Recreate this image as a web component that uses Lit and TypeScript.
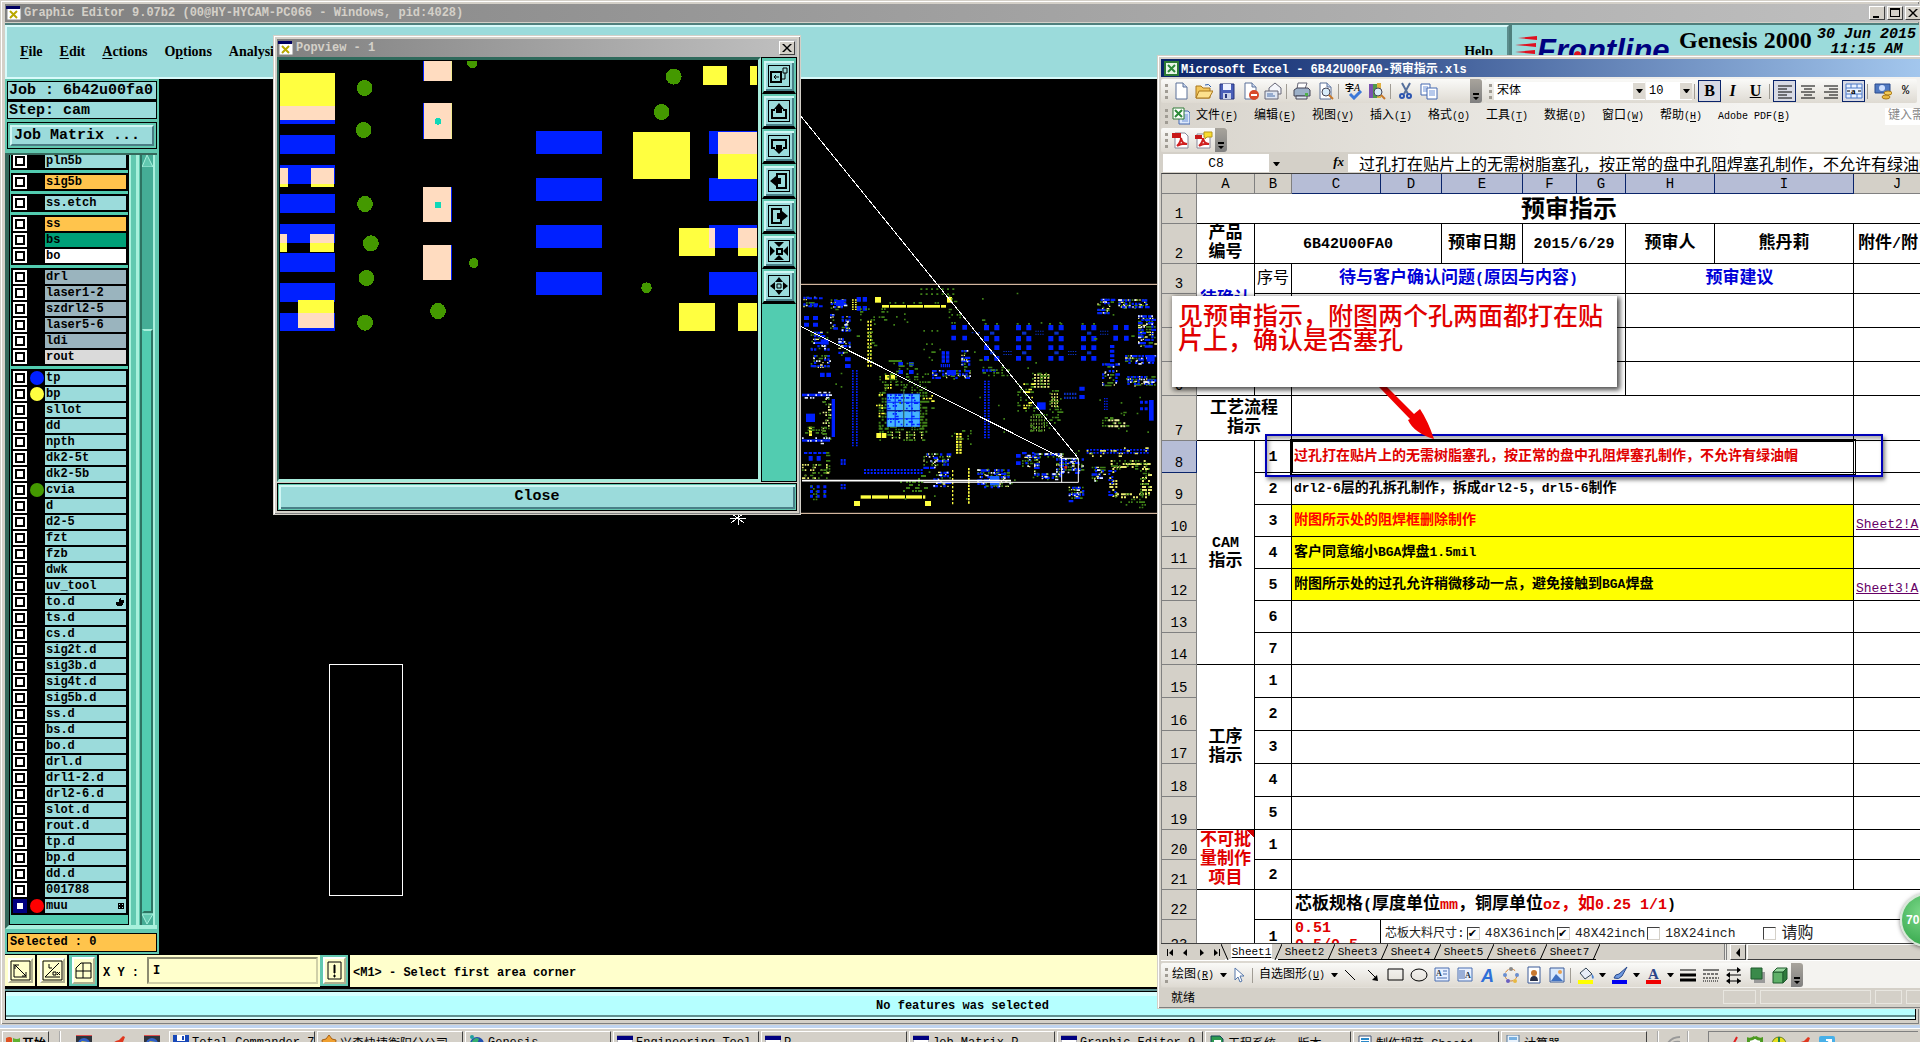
import { LitElement, html, svg, css, nothing } from "lit";
import { customElement } from "lit/decorators.js";
import { classMap } from "lit/directives/class-map.js";

type Layer = { name: string; tone?: string; dot?: string; mark?: string; on?: boolean };

const plain = (...names: string[]): Layer[] => names.map((name) => ({ name }));
const toned = (tone: string, ...names: string[]): Layer[] => names.map((name) => ({ name, tone }));

const LAYER_GROUPS: Layer[][] = [
  plain("pln5b"),
  toned("amber", "sig5b"),
  plain("ss.etch"),
  [{ name: "ss", tone: "amber" }, { name: "bs", tone: "jade" }, { name: "bo", tone: "white" }],
  [...toned("slate", "drl", "laser1-2", "szdrl2-5", "laser5-6", "ldi"), { name: "rout", tone: "silver" }],
  [
    { name: "tp", dot: "blue" },
    { name: "bp", dot: "yellow" },
    ...plain("sllot", "dd", "npth", "dk2-5t", "dk2-5b"),
    { name: "cvia", dot: "green" },
    ...plain("d", "d2-5", "fzt", "fzb", "dwk", "uv_tool"),
    { name: "to.d", mark: "hand" },
    ...plain("ts.d", "cs.d", "sig2t.d", "sig3b.d", "sig4t.d", "sig5b.d", "ss.d", "bs.d", "bo.d", "drl.d",
      "drl1-2.d", "drl2-6.d", "slot.d", "rout.d", "tp.d", "bp.d", "dd.d", "001788"),
    { name: "muu", dot: "red", mark: "grid", on: true },
  ],
];

const BLUE = "#0020ff";
const YELLOW = "#ffff40";
const PEACH = "#ffdcc0";
const GREEN = "#449900";
const DIM = "#3f8018";
const WHITE = "#ffffff";

/** Wraps the Chinese runs of a mixed string so that they can be sized apart from the Latin ones. */
const mix = (text: string) =>
  text.split(/([\u2e80-\u9fff\uff00-\uffef]+)/).map((part, i) => (i % 2 ? html`<span class="cj">${part}</span>` : part));

const block = (x: number, y: number, w: number, h: number, fill: string) =>
  svg`<rect x=${x} y=${y} width=${w} height=${h} fill=${fill}></rect>`;

/** One path holding a regular array of pads. */
const pads = (x: number, y: number, cols: number, rows: number, dx: number, dy: number, w: number, h: number, fill: string) => {
  let d = "";
  for (let r = 0; r < rows; r++) for (let c = 0; c < cols; c++) d += `M${x + c * dx} ${y + r * dy}h${w}v${h}h${-w}z`;
  return svg`<path d=${d} fill=${fill}></path>`;
};

/** One path of loosely scattered pads, seeded so that the board is always the same. */
const scatter = (x: number, y: number, w: number, h: number, n: number, s: number, fill: string, seed: number) => {
  let v = Math.imul(seed + 1, 0x9e3779b1);
  const next = () => {
    v = (v + 0x6d2b79f5) | 0;
    let t = Math.imul(v ^ (v >>> 15), 1 | v);
    t = (t + Math.imul(t ^ (t >>> 7), 61 | t)) ^ t;
    return ((t ^ (t >>> 14)) >>> 0) / 4294967296;
  };
  const step = s + 3;
  let d = "";
  for (let i = 0; i < n; i++) {
    const px = x + Math.floor((next() * w) / step) * step;
    const py = y + Math.floor((next() * h) / step) * step;
    const k = next() > 0.8 ? s * 2 : s;
    d += `M${px} ${py}h${k}v${s}h${-k}z`;
  }
  return svg`<path d=${d} fill=${fill}></path>`;
};

/** A dense neighbourhood of mixed small parts. */
const parts = (x: number, y: number, w: number, h: number, n: number, seed: number) => [
  scatter(x, y, w, h, Math.round(n * 0.9), 5, DIM, seed),
  scatter(x, y, w, h, Math.round(n * 0.8), 7, BLUE, seed + 1),
  scatter(x, y, w, h, Math.round(n * 0.4), 4, "#f4f08a", seed + 2),
  scatter(x, y, w, h, Math.round(n * 0.2), 5, "#dfe6ff", seed + 3),
];

const boardArt = () => svg`
  <g transform="translate(790 240) scale(0.33333)">
    ${parts(40, 170, 40, 30, 8, 3)} ${pads(55, 172, 3, 2, 16, 24, 11, 6, BLUE)}
    ${parts(122, 178, 50, 26, 14, 5)} ${block(138, 180, 24, 18, BLUE)}
    ${pads(200, 171, 2, 2, 18, 27, 13, 14, BLUE)} ${pads(186, 178, 2, 5, 9, 7, 5, 4, YELLOW)}
    ${pads(42, 228, 2, 2, 27, 20, 15, 12, BLUE)}
    ${parts(120, 222, 12, 50, 8, 8)} ${parts(155, 228, 26, 50, 16, 11)}
    ${parts(62, 275, 56, 60, 26, 14)} ${parts(145, 295, 36, 50, 16, 17)} ${parts(62, 345, 60, 40, 20, 20)}
    ${block(92, 298, 24, 16, BLUE)} ${pads(90, 398, 2, 1, 19, 1, 14, 13, BLUE)} ${pads(165, 352, 1, 2, 1, 20, 17, 12, BLUE)}
    ${block(255, 171, 18, 17, YELLOW)} ${block(471, 171, 15, 17, YELLOW)}
    ${block(276, 195, 192, 8, YELLOW)} ${pads(297, 193, 4, 1, 51, 1, 3, 12, "#000")}
    ${scatter(290, 186, 160, 8, 10, 5, DIM, 23)}
    ${pads(391, 145, 7, 2, 16, 15, 6, 5, DIM)} ${scatter(476, 150, 36, 110, 14, 5, DIM, 24)}
    ${scatter(210, 205, 90, 45, 18, 5, DIM, 26)} ${scatter(310, 220, 70, 70, 6, 5, DIM, 27)} ${scatter(400, 270, 60, 90, 12, 5, DIM, 28)}
    ${pads(232, 242, 2, 13, 8, 11, 5, 6, YELLOW)} ${scatter(236, 250, 20, 120, 14, 5, DIM, 29)}
    ${pads(186, 390, 2, 29, 12, 8, 5, 5, BLUE)}
    ${block(296, 360, 40, 6, DIM)} ${pads(325, 366, 2, 2, 32, 24, 14, 12, BLUE)}
    ${scatter(310, 368, 75, 40, 14, 5, DIM, 30)}
    ${pads(285, 405, 2, 1, 17, 1, 13, 14, YELLOW)} ${pads(284, 432, 3, 2, 8, 9, 5, 5, YELLOW)}
    ${scatter(268, 400, 150, 60, 80, 5, DIM, 31)} ${scatter(266, 455, 24, 120, 44, 6, DIM, 32)}
    ${scatter(388, 455, 24, 120, 44, 6, DIM, 33)} ${scatter(268, 558, 140, 44, 60, 5, DIM, 34)}
    ${block(290, 461, 100, 99, BLUE)}
    ${pads(292, 463, 4, 4, 25, 25, 22, 22, "#45b4ff")}
    ${scatter(292, 463, 92, 92, 60, 5, BLUE, 35)}
    ${block(289, 511, 102, 3, "#102060")} ${block(340, 450, 3, 108, "#408040")}
    ${pads(259, 579, 2, 1, 16, 1, 14, 15, YELLOW)} ${pads(305, 575, 5, 3, 22, 8, 4, 5, "#e8e870")}
    ${scatter(258, 462, 20, 90, 10, 5, YELLOW, 36)} ${scatter(400, 465, 34, 20, 8, 5, YELLOW, 37)}
    ${block(36, 461, 84, 8, BLUE)} ${scatter(36, 455, 84, 20, 14, 5, "#dfe6ff", 38)}
    ${block(125, 477, 10, 114, BLUE)} ${scatter(98, 475, 24, 110, 24, 5, "#e8f090", 39)} ${scatter(98, 475, 24, 130, 22, 5, DIM, 40)}
    ${block(48, 521, 27, 25, BLUE)} ${pads(57, 560, 1, 3, 1, 10, 9, 8, YELLOW)} ${scatter(45, 560, 60, 30, 18, 5, DIM, 41)}
    ${block(36, 598, 84, 7, BLUE)} ${scatter(36, 592, 94, 20, 14, 5, "#dfe6ff", 42)}
    ${pads(42, 636, 5, 1, 14, 1, 10, 6, BLUE)} ${pads(56, 648, 2, 1, 24, 1, 12, 14, BLUE)}
    ${scatter(108, 636, 12, 60, 18, 5, DIM, 43)} ${scatter(36, 672, 80, 46, 22, 5, "#e8e870", 44)} ${scatter(36, 672, 80, 50, 20, 5, DIM, 45)}
    ${pads(152, 657, 2, 2, 9, 10, 6, 8, BLUE)} ${pads(152, 732, 2, 2, 9, 9, 6, 7, BLUE)}
    ${pads(60, 736, 3, 3, 20, 14, 9, 9, BLUE)} ${scatter(45, 736, 60, 50, 10, 5, DIM, 46)}
    ${pads(222, 687, 18, 2, 10, 9, 6, 6, BLUE)}
    ${block(212, 766, 194, 10, YELLOW)} ${pads(243, 764, 4, 1, 51, 1, 3, 14, "#000")}
    ${block(192, 783, 18, 15, YELLOW)} ${block(405, 783, 18, 15, YELLOW)} ${scatter(330, 705, 75, 55, 18, 6, DIM, 47)}
    ${parts(426, 390, 115, 26, 26, 50)} ${pads(455, 334, 2, 3, 13, 12, 10, 10, BLUE)} ${pads(452, 372, 5, 1, 6, 1, 4, 10, BLUE)}
    ${block(470, 390, 28, 16, BLUE)} ${parts(514, 330, 22, 60, 16, 54)}
    ${pads(484, 255, 2, 2, 33, 32, 14, 14, BLUE)}
    ${[582, 678, 775, 873].map((x) => [pads(x, 255, 2, 2, 31, 33, 15, 16, BLUE), pads(x, 316, 2, 2, 31, 32, 15, 14, BLUE),
      pads(x + 2, 249, 2, 1, 34, 1, 6, 5, DIM), block(x + 18, 275, 13, 9, "#0a30c0"), block(x + 18, 334, 13, 9, "#0a30c0")])}
    ${pads(970, 255, 2, 2, 32, 32, 14, 15, BLUE)} ${pads(960, 315, 1, 5, 1, 14, 13, 9, BLUE)}
    ${pads(545, 276, 3, 1, 10, 1, 5, 4, "#0a30c0")} ${pads(736, 272, 4, 2, 7, 9, 4, 3, "#0a30c0")} ${pads(930, 272, 4, 2, 7, 9, 4, 3, "#0a30c0")}
    ${pads(640, 333, 4, 2, 7, 9, 4, 3, "#0a30c0")} ${pads(834, 333, 4, 2, 7, 9, 4, 3, "#0a30c0")}
    ${pads(576, 388, 4, 1, 11, 1, 8, 7, BLUE)} ${pads(582, 422, 2, 22, 11, 8, 6, 5, BLUE)} ${scatter(578, 380, 80, 30, 20, 5, DIM, 58)}
    ${pads(732, 402, 5, 5, 10, 9, 6, 5, "#f0f080")} ${scatter(726, 398, 56, 46, 20, 5, DIM, 59)}
    ${scatter(682, 430, 50, 90, 34, 5, DIM, 60)} ${scatter(700, 430, 28, 90, 14, 5, YELLOW, 61)}
    ${block(741, 487, 26, 22, BLUE)} ${scatter(778, 450, 40, 90, 40, 5, DIM, 62)} ${pads(784, 460, 3, 5, 8, 9, 4, 5, "#e8e870")}
    ${pads(722, 528, 6, 5, 8, 10, 3, 6, "#8fb84a")} ${scatter(720, 522, 80, 55, 24, 5, DIM, 63)}
    ${pads(868, 440, 1, 2, 1, 25, 16, 12, BLUE)} ${pads(822, 458, 5, 2, 8, 12, 5, 7, "#0a30c0")}
    ${pads(498, 579, 2, 8, 10, 8, 7, 6, YELLOW)} ${scatter(484, 570, 70, 60, 12, 5, DIM, 64)}
    ${parts(400, 640, 80, 44, 30, 66)} ${pads(486, 690, 1, 9, 1, 12, 4, 7, YELLOW)} ${pads(534, 684, 1, 11, 1, 10, 5, 7, YELLOW)}
    ${parts(430, 695, 50, 50, 20, 70)} ${parts(562, 688, 100, 56, 50, 74)} ${block(600, 708, 28, 28, "#1a60ff")}
    ${pads(678, 642, 1, 2, 1, 22, 14, 11, BLUE)} ${parts(696, 636, 34, 44, 12, 78)}
    ${parts(732, 640, 85, 10, 20, 80)} ${parts(732, 650, 18, 60, 18, 83)} ${parts(798, 645, 22, 65, 24, 86)} ${parts(755, 700, 50, 20, 14, 89)}
    ${parts(825, 655, 56, 44, 24, 92)} ${block(823, 678, 8, 8, "#d03020")}
    ${parts(836, 740, 42, 44, 22, 95)} ${parts(905, 680, 38, 44, 18, 98)}
    ${pads(890, 627, 19, 2, 10, 9, 6, 5, BLUE)} ${scatter(890, 622, 190, 26, 18, 5, "#e8e870", 101)}
    ${parts(922, 176, 44, 46, 18, 103)} ${parts(985, 178, 90, 28, 34, 106)} ${parts(1044, 226, 50, 95, 60, 109)}
    ${parts(1005, 345, 90, 26, 30, 112)} ${block(1070, 345, 24, 20, BLUE)} ${parts(936, 370, 50, 70, 20, 115)} ${parts(1012, 408, 85, 30, 34, 118)}
    ${block(1077, 480, 14, 62, BLUE)} ${pads(1050, 482, 2, 2, 14, 20, 9, 9, BLUE)}
    ${pads(942, 474, 2, 5, 7, 8, 4, 4, BLUE)} ${scatter(936, 515, 80, 60, 24, 5, DIM, 121)} ${scatter(955, 538, 48, 30, 16, 6, "#f0f0a0", 122)}
    ${scatter(962, 660, 112, 24, 30, 6, "#e8e870", 124)} ${scatter(958, 684, 24, 84, 22, 6, "#e8e870", 125)}
    ${scatter(1056, 684, 24, 84, 26, 6, "#e8e870", 126)} ${scatter(975, 760, 100, 18, 20, 6, "#e8e870", 127)}
    ${scatter(955, 660, 128, 26, 30, 5, DIM, 128)} ${scatter(975, 760, 90, 44, 26, 5, DIM, 129)} ${scatter(955, 690, 20, 80, 16, 6, BLUE, 130)}
    ${scatter(1050, 690, 30, 80, 22, 5, DIM, 131)} ${scatter(40, 150, 1050, 640, 50, 5, DIM, 140)}
    <g fill="none" stroke=${PEACH} stroke-width="3"><path d="M0 133H1140M0 820H1140"></path></g>
    <g fill="none" stroke=${WHITE} stroke-width="3">
      <path d="M36 722H663" stroke-width="5"></path><path d="M400 727H865V655H815V727"></path>
    </g>
  </g>
  <g fill="none" stroke="#fff" shape-rendering="crispEdges">
    <path d="M800 115L1078 458M800 326L1062 458"></path>
    <rect x="329" y="664" width="73" height="231"></rect>
    <path d="M731 513l13 10M731 523l13-10M738 511v14M730 518h16"></path>
  </g>`;

const popArt = () => {
  const left: [number, number][] = [[318, 57], [408, 57], [495, 57], [585, 57], [672, 57], [762, 57], [852, 54]];
  const vias: [number, number, number][] = [[275, 177, 24], [272, 303, 24], [276, 525, 24], [293, 643, 24], [280, 747, 24],
    [276, 881, 24], [488, 846, 24], [592, 702, 15], [588, 102, 16], [1173, 143, 24], [1138, 249, 24], [1094, 776, 16]];
  return svg`
    ${left.map(([y, h]) => block(29, y, 160, h, BLUE))}
    ${block(29, 132, 160, 98, YELLOW)} ${block(29, 230, 160, 43, PEACH)} ${block(29, 273, 160, 12, BLUE)}
    ${block(29, 417, 23, 48, PEACH)} ${block(29, 465, 23, 9, YELLOW)} ${block(119, 417, 67, 48, PEACH)} ${block(119, 465, 67, 9, YELLOW)}
    ${block(49, 642, 67, 27, "#000")} ${block(29, 615, 20, 27, PEACH)} ${block(29, 642, 20, 27, YELLOW)}
    ${block(116, 615, 70, 27, PEACH)} ${block(116, 642, 70, 27, YELLOW)}
    ${block(81, 813, 105, 39, YELLOW)} ${block(81, 852, 105, 45, PEACH)}
    ${[[96, 60], [222, 108]].map(([y, h]) => [block(444, y, 84, h, BLUE), block(447, y, 81, h, PEACH), block(525, y, 3, h, "#f0e890")])}
    ${[[474, 105], [648, 105]].map(([y, h]) => [block(444, y, 84, h, BLUE), block(444, y, 81, h, PEACH)])}
    ${[306, 447, 588, 729].map((y) => [block(772, y, 192, 69, BLUE), block(1275, y, 139, 69, BLUE)])}
    ${block(1054, 309, 166, 141, YELLOW)} ${block(1301, 309, 113, 66, PEACH)} ${block(1301, 375, 113, 75, YELLOW)}
    ${block(1257, 111, 70, 57, YELLOW)} ${block(1394, 111, 20, 57, YELLOW)}
    ${block(1188, 597, 104, 84, YELLOW)} ${block(1275, 597, 17, 60, "#ffdcd0")}
    ${block(1359, 597, 55, 60, PEACH)} ${block(1359, 657, 55, 24, YELLOW)}
    ${block(1188, 822, 104, 84, YELLOW)} ${block(1359, 822, 55, 84, YELLOW)}
    ${vias.map(([x, y, r]) => svg`<ellipse cx=${x} cy=${y} rx=${r - 1} ry=${r} fill=${GREEN}></ellipse>`)}
    ${[277, 528].map((y) => svg`<ellipse cx="488" cy=${y} rx="10" ry="10" fill="#10d8b8"></ellipse>`)}
    ${block(560, 86, 60, 9, "#000")}`;
};

/* Zoom and pan icons of the popview, on a 22 x 22 field. */
const POP_ICONS: [string, unknown][] = [
  ["Zoom to window", svg`<path d="M3 7h10v10H3zM15 3h4v5h-4zM13 14h4v-6" fill="none" stroke="#000"></path><path d="M3 7h10v10H3z" fill="none" stroke="#000" stroke-width="2"></path><path d="M6 12h5M8 10l-2 2 2 2" fill="none" stroke="#000"></path>`],
  ["Pan up", svg`<path d="M7 10H4v8h14v-8h-3" fill="none" stroke="#000" stroke-width="2"></path><path d="M11 3l5 6h-2v4H8V9H6z"></path>`],
  ["Pan down", svg`<path d="M7 13H4V5h14v8h-3" fill="none" stroke="#000" stroke-width="2"></path><path d="M11 19l5-5h-2v-4H8v4H6z"></path>`],
  ["Pan left", svg`<path d="M9 8V4h9v14H9v-4" fill="none" stroke="#000" stroke-width="2"></path><path d="M2 11l6-5v2h5v6H8v2z"></path>`],
  ["Pan right", svg`<path d="M13 8V4H4v14h9v-4" fill="none" stroke="#000" stroke-width="2"></path><path d="M20 11l-6-5v2H9v6h5v2z"></path>`],
  ["Zoom in", svg`<path d="M9 9h5v5H9z" fill="none" stroke="#000" stroke-width="2"></path><path d="M6 2h10l-5 5zM6 20h10l-5-5zM2 6v10l5-5zM20 6v10l-5-5z"></path>`],
  ["Zoom out", svg`<path d="M9 9h4v4H9z" fill="none" stroke="#000"></path><path d="M11 2l4 5H7zM11 20l4-5H7zM2 11l5-4v8zM20 11l-5-4v8z"></path>`],
];

const page = svg`<path d="M4 1h7l4 4v12H4z" fill="#fff" stroke="#5a7099"></path><path d="M11 1v4h4" fill="#c8d6ee" stroke="#5a7099"></path>`;
const glass = svg`<circle cx="10" cy="10" r="4" fill="#d8ecfa" stroke="#445"></circle><path d="M13 13l4 4" stroke="#c8792b" stroke-width="2"></path>`;

const ICONS: Record<string, unknown> = {
  New: page,
  Open: svg`<path d="M1 4h5l2 2h7v10H1z" fill="#f3c65a" stroke="#a9771c"></path><path d="M4 9h14l-4 7H1z" fill="#fde08c" stroke="#a9771c"></path><path d="M10 3q4-2 6 2" fill="none" stroke="#2b5da8"></path>`,
  Save: svg`<path d="M2 2h14v15H2z" fill="#4a5fb8" stroke="#26347c"></path><path d="M5 2h8v6H5z" fill="#eef2ff"></path><path d="M5 11h8v6H5z" fill="#c8d0e8"></path><path d="M7 12h2v4H7z" fill="#26347c"></path>`,
  Permission: svg`${page}<circle cx="13" cy="13" r="5" fill="#d8492b"></circle><path d="M10 13h6" stroke="#fff" stroke-width="2"></path>`,
  "E-mail": svg`<path d="M5 6l6-5 6 5v6H5z" fill="#f4f6fb" stroke="#667"></path><path d="M1 9h13v8H1z" fill="#dfe6f2" stroke="#667"></path><path d="M3 12h6M3 14h8" stroke="#4a6ea8"></path>`,
  Print: svg`<path d="M5 1h9l-2 6H4z" fill="#fff" stroke="#667"></path><path d="M1 8l3-2h11l2 2v6H1z" fill="#9cb0c8" stroke="#445"></path><path d="M3 14h11v3H3z" fill="#dfe6f2" stroke="#445"></path><path d="M12 11h3v3h-3z" fill="#4fb04a"></path>`,
  Preview: svg`${page}${glass}`,
  Spelling: svg`<text x="0" y="9" font-size="9" font-weight="bold" font-family="Noto Sans CJK SC">字</text><text x="9" y="9" font-size="10" font-style="italic" font-family="Liberation Serif">A</text><path d="M5 12l4 4 7-7" fill="none" stroke="#3b78d8" stroke-width="3"></path>`,
  Research: svg`<path d="M1 2h4v14H1z" fill="#7a52b0"></path><path d="M5 2h4v14H5z" fill="#4f9a4a"></path><path d="M9 1h4v15H9z" fill="#e0b040"></path>${glass}`,
  Cut: svg`<path d="M5 1l6 11M13 1L7 12" stroke="#56709c" stroke-width="2"></path><circle cx="5" cy="14" r="2" fill="none" stroke="#2c55b0" stroke-width="2"></circle><circle cx="12" cy="14" r="2" fill="none" stroke="#2c55b0" stroke-width="2"></circle>`,
  Copy: svg`<path d="M1 2h9v11H1z" fill="#fff" stroke="#4468b0"></path><path d="M3 5h5M3 7h5M3 9h5" stroke="#6f93d8"></path><path d="M7 6h10v11H7z" fill="#fff" stroke="#4468b0"></path><path d="M9 9h6M9 11h6M9 13h6" stroke="#6f93d8"></path>`,
  "Align left": svg`<path d="M2 4h14M2 7h9M2 10h14M2 13h9M2 16h14" stroke="#000"></path>`,
  Center: svg`<path d="M2 4h14M5 7h8M2 10h14M5 13h8M2 16h14" stroke="#000"></path>`,
  "Align right": svg`<path d="M2 4h14M7 7h9M2 10h14M7 13h9M2 16h14" stroke="#000"></path>`,
  Merge: svg`<path d="M1 2h16v14H1zM1 6h16M1 12h16M6 2v4M12 2v4M6 12v4M12 12v4" fill="#eaf2ff" stroke="#4a78c8"></path><path d="M2 9h3M16 9h-3" stroke="#000"></path><text x="6" y="12" font-size="9" font-weight="bold" font-family="Liberation Serif">a</text>`,
  Currency: svg`<path d="M1 2h15v9H1z" fill="#4f78c0" stroke="#2b4a8c"></path><circle cx="8" cy="6" r="3" fill="#cfe0ff"></circle><ellipse cx="12" cy="15" rx="4" ry="2" fill="#e8b840" stroke="#a87818"></ellipse><ellipse cx="14" cy="11" rx="4" ry="2" fill="#f4cc58" stroke="#a87818"></ellipse>`,
  PDF: svg`<path d="M3 2h10l3 3v12H3z" fill="#fff" stroke="#889"></path><path d="M0 2h9v5H0z" fill="#c81818"></path><path d="M5 15q4-4 4-8 1 6 6 6-5-1-10 2" fill="none" stroke="#d02020" stroke-width="2"></path>`,
  "PDF review": svg`<path d="M2 3h10l3 3v11H2z" fill="#fff" stroke="#889"></path><path d="M0 4h7v4H0z" fill="#c81818"></path><path d="M4 15q4-4 4-8 1 6 6 6-5-1-10 2" fill="none" stroke="#d02020" stroke-width="2"></path><path d="M9 1h8v5h-5l-2 2V6H9z" fill="#f8dc30" stroke="#b89818"></path>`,
  Workbook: svg`<path d="M7 4h9l2 2v11H7z" fill="#dce8fa" stroke="#4468b0"></path><path d="M10 8h6M10 10h6M10 12h6M10 14h6" stroke="#6f93d8"></path><path d="M1 1h11v11H1z" fill="#fff" stroke="#2c7a34"></path><path d="M3 3l7 7M10 3l-7 7" stroke="#2c8a38" stroke-width="2"></path>`,
  Select: svg`<path d="M5 2v12l3-3 2 5 2-1-2-5h4z" fill="#fff" stroke="#5577aa"></path>`,
  Line: svg`<path d="M4 4l10 10" stroke="#000"></path>`,
  Arrow: svg`<path d="M4 4l8 8" stroke="#000"></path><path d="M14 15l-1-6-5 5z"></path>`,
  Rectangle: svg`<path d="M1 3h15v11H1z" fill="none" stroke="#000"></path>`,
  Oval: svg`<ellipse cx="9" cy="9" rx="8" ry="6" fill="none" stroke="#000"></ellipse>`,
  "Text box": svg`<path d="M2 2h14v13H2z" fill="#e8f0ff" stroke="#4a6fb0"></path><text x="3" y="10" font-size="8" font-weight="bold" font-family="Liberation Serif" fill="#234">A</text><path d="M10 5h4M10 8h4M4 12h10" stroke="#4a6fb0"></path>`,
  "Vertical text box": svg`<path d="M2 2h14v13H2z" fill="#e8f0ff" stroke="#4a6fb0"></path><path d="M4 4v9M6 4v9M8 4v9" stroke="#4a6fb0"></path><text x="9" y="12" font-size="8" font-weight="bold" font-family="Liberation Serif" fill="#234">A</text>`,
  WordArt: svg`<text x="2" y="16" font-size="18" font-weight="bold" font-style="italic" font-family="Liberation Sans" fill="#2f6fd8">A</text>`,
  Diagram: svg`<circle cx="9" cy="9" r="6" fill="none" stroke="#d08030" stroke-dasharray="4 3"></circle><circle cx="9" cy="3" r="2" fill="#888"></circle><circle cx="3" cy="9" r="2" fill="#6a8fd0"></circle><circle cx="15" cy="9" r="2" fill="#6a8fd0"></circle><circle cx="6" cy="15" r="2" fill="#6a5fc0"></circle><circle cx="13" cy="15" r="2" fill="#e8b840"></circle>`,
  "Clip art": svg`<path d="M3 1h12v16H3z" fill="#fff" stroke="#3a5a98"></path><circle cx="9" cy="7" r="3" fill="#c87830"></circle><path d="M5 15q0-5 4-5t4 5z" fill="#28304a"></path>`,
  Picture: svg`<path d="M2 2h14v14H2z" fill="#d8e8fc" stroke="#3a5a98"></path><path d="M3 15l5-7 7 7z" fill="#3f70c0"></path><circle cx="12" cy="6" r="2" fill="#e8a050"></circle>`,
  "Fill colour": svg`<path d="M3 7l6-5 6 6-7 5z" fill="#e8eef8" stroke="#345"></path><path d="M15 8q3 3 1 5-2-1-1-5" fill="#4a80d0"></path><path d="M1 14h15v4H1z" fill="#ffff00"></path>`,
  "Line colour": svg`<path d="M3 12q1-4 5-4l8-7-5 9q-3 4-8 2" fill="#6f9ae0" stroke="#2b4a8c"></path><path d="M1 14h15v4H1z" fill="#0000f0"></path>`,
  "Font colour": svg`<text x="3" y="13" font-size="15" font-weight="bold" font-family="Liberation Serif" fill="#2a4488">A</text><path d="M1 14h15v4H1z" fill="#f00000"></path>`,
  "Line style": svg`<path d="M1 4h16" stroke="#000"></path><path d="M1 9h16" stroke="#000" stroke-width="3"></path><path d="M1 14h16" stroke="#000" stroke-width="3"></path>`,
  "Dash style": svg`<path d="M1 4h16" stroke="#000"></path><path d="M1 8h16" stroke="#000" stroke-dasharray="3 1"></path><path d="M1 12h16" stroke="#000" stroke-dasharray="2 1"></path><path d="M1 15h16" stroke="#000" stroke-dasharray="1 1"></path>`,
  "Arrow style": svg`<path d="M2 4h13M2 9h14M2 15h14" stroke="#000"></path><path d="M12 1l4 3-4 3zM5 6L1 9l4 3zM12 12l4 3-4 3zM5 12l-4 3 4 3z"></path>`,
  Shadow: svg`<path d="M6 6h11v11H6z" fill="#9a9a9a"></path><path d="M3 2h11v11H3z" fill="#3a8a4a" stroke="#1f5a2c"></path>`,
  "3-D": svg`<path d="M2 6h10v11H2z" fill="#5fb068" stroke="#1f5a2c"></path><path d="M2 6l4-4h10l-4 4z" fill="#9ad8a0" stroke="#1f5a2c"></path><path d="M12 6l4-4v11l-4 4z" fill="#2f7a3c" stroke="#1f5a2c"></path>`,
};

const TASKS: [string, string][] = [
  ["save", "Total Commander 7..."], ["bell", "兴森快捷衡阳分公司"], ["globe", "Genesis"], ["win", "Engineering Tool..."], ["win", "P..."],
  ["win", "Job Matrix P..."], ["win", "Graphic Editor 9..."], ["sys", "工程系统 - 版本..."], ["doc", "制作规范-Sheet1"], ["calc", "计算器"],
];

const TASK_ICONS: Record<string, unknown> = {
  save: svg`<path d="M0 0h16v16H0z" fill="#1848b8"></path><path d="M4 0h8v6H4z" fill="#fff"></path><path d="M9 1h2v4H9z" fill="#1848b8"></path>`,
  bell: svg`<path d="M8 0l3 4 4 1-1 8H2L1 5l4-1z" fill="#f0a030" stroke="#a86010"></path>`,
  globe: svg`<circle cx="8" cy="9" r="7" fill="#2050b0"></circle><path d="M2 8q4-7 8-4l-2 5-4 1z" fill="#38b070"></path><circle cx="3" cy="2" r="2" fill="#20a0a0"></circle>`,
  win: svg`<path d="M0 1h16v14H0z" fill="#fff" stroke="#667"></path><path d="M0 1h16v4H0z" fill="#000080"></path><path d="M3 8l7 6M10 8l-7 6" stroke="#c8b400" stroke-width="2"></path>`,
  sys: svg`<path d="M2 1h9l3 3v12H2z" fill="#2c9a50" stroke="#145"></path><path d="M5 6h7M5 9h7" stroke="#fff" stroke-width="2"></path>`,
  doc: svg`<path d="M2 1h12v15H2z" fill="#fff" stroke="#457"></path><path d="M4 4h8M4 7h8M4 10h8" stroke="#2a88c8" stroke-width="2"></path>`,
  calc: svg`<path d="M2 0h12v16H2z" fill="#e8f2fc" stroke="#579"></path><path d="M4 2h8v3H4z" fill="#78b0e0"></path><path d="M4 8h8M4 11h8" stroke="#89a" stroke-dasharray="2 1"></path>`,
  ie: svg`<path d="M0 0h16v16H0z" fill="#30343c"></path><circle cx="8" cy="9" r="6" fill="#3060c8"></circle><path d="M5 6l5 6 2-5z" fill="#f0d040"></path><path d="M0 0h16v1H0z" fill="#e05050"></path>`,
  red: svg`<path d="M1 12q2-6 8-7l4-4 2 1-2 5q-5 1-6 7l-3 2z" fill="#e03820"></path>`,
  check: svg`<path d="M1 12L6 16 14 1" fill="none" stroke="#e02020" stroke-width="2"></path>`,
  shield: svg`<path d="M8 1q4 3 7 2-1 9-7 13Q2 12 1 3q4 1 7-2" fill="#fff" stroke="#4c9a20" stroke-width="3"></path>`,
  ball: svg`<circle cx="8" cy="8" r="7" fill="#e8e020" stroke="#688020"></circle><path d="M8 1v8l4 3" fill="none" stroke="#284" stroke-width="2"></path>`,
  sky: svg`<rect width="16" height="16" rx="2" fill="#48b0e8"></rect><path d="M4 12l8-8M7 4h5v5" fill="none" stroke="#fff" stroke-width="2"></path>`,
};

@customElement("app-root")
export class AppRoot extends LitElement {
  static styles = css`
    :host {
      --mono: "Liberation Mono", "Noto Sans CJK SC", monospace;
      --teal: #52ccb0;
      --pale: #9bdbdb;
      display: block;
      position: relative;
      height: 100vh;
      overflow: hidden;
      background: #c0d4f0;
      font: 12px var(--mono);
      color: #000;
    }
    * { box-sizing: border-box; }
    button, input, select { font: inherit; color: inherit; margin: 0; padding: 0; border: 0; border-radius: 0; background: none; }
    svg { display: block; flex: none; }
    a { color: inherit; }

    .window { position: absolute; display: flex; flex-direction: column; background: #d4d0c8; border: 1px solid #d4d0c8; box-shadow: inset 1px 1px #fff, inset -1px -1px #808080; }
    .title { display: flex; align-items: center; gap: 2px; height: 18px; flex: none; padding: 0 2px 0 1px; font-weight: bold; color: #d4d0c8; background: linear-gradient(90deg, #808080, #c0c0c0); white-space: nowrap; }
    .title .name { flex: 1; overflow: hidden; }
    .caption { width: 16px; height: 14px; background: #d4d0c8; border: 1px solid; border-color: #fff #404040 #404040 #fff; color: #000; display: flex; align-items: center; justify-content: center; }

    /* Graphic editor */
    .editor { inset: 0 0 17px 0; padding: 3px 0 4px 4px; }
    .editor > .title { margin-bottom: 1px; }
    .editor > .title .caption:last-child { margin-right: -4px; }
    .top { display: flex; flex: none; height: 56px; background: #4f7f7c; padding-top: 2px; gap: 3px; }
    .menubar { flex: 1; display: flex; gap: 17px; background: var(--pale); border: 2px solid; border-color: #d8fafa #5c8c8c #d8fafa #d8fafa; padding: 0 14px 0 13px; align-items: center; font: bold 14px "Liberation Serif", serif; }
    .menubar u, .xmenu u { text-underline-offset: 2px; }
    .menubar .help { margin-left: auto; }
    .brand { display: flex; width: 407px; background: var(--pale); padding-left: 3px; overflow: hidden; }
    .logo { display: flex; width: 164px; color: #000080; font: italic bold 31px/31px "Liberation Sans", sans-serif; padding-top: 10px; }
    .logo .eye { background: radial-gradient(circle at 50% 62%, #e01020 3px, transparent 4px); }
    .product { font: bold 24px/30px "Liberation Serif", serif; width: 138px; }
    .clock { font: italic bold 15px/15px var(--mono); text-align: center; padding-top: 2px; white-space: nowrap; }
    .body { flex: 1; display: flex; min-height: 0; }
    .panel { width: 154px; flex: none; background: #62c8b0; display: flex; flex-direction: column; padding: 2px; font-weight: bold; }
    .info { height: 19px; border: 1px solid #000; background: var(--pale); font: bold 15px/18px var(--mono); padding-left: 1px; white-space: nowrap; }
    .info + .info { border-top-width: 2px; }
    .matrix { height: 27px; margin-top: 3px; border: 1px solid #000; padding: 2px; display: flex; }
    .matrix button { flex: 1; background: var(--pale); border: 2px solid; border-color: #d0f6f4 #4a7c84 #4a7c84 #d0f6f4; font: bold 15px/17px var(--mono); text-align: left; padding-left: 2px; }
    .lists { flex: 1; display: flex; min-height: 0; margin: 4px 0 4px -2px; border-top: 2px solid #35685c; border-left: 4px solid #35685c; border-bottom: 4px solid #a8f0dc; }
    .view { width: 123px; border: 1px solid #000; border-top: 0; background: var(--teal); padding: 0 0 0 1px; overflow: hidden; display: flex; flex-direction: column; gap: 3px; }
    .group { width: 117px; background: #000; padding: 2px; display: flex; flex-direction: column; gap: 2px; }
    .group:first-child { margin-top: -3px; }
    .layer { display: flex; height: 14px; }
    .tick { appearance: none; width: 14px; height: 14px; background: #000; border: 2px solid #fff; outline: 3px solid #fff; outline-offset: -9px; padding: 0; }
    .tick.on { border-color: #000080; background: #000080; }
    .dot { width: 14px; height: 14px; border-radius: 7px; margin: 0 1px 0 3px; }
    .dot.blue { background: #0020ff; } .dot.yellow { background: #ffff40; } .dot.green { background: #449900; } .dot.red { background: #f00; }
    .tag { flex: 1; background: var(--pale); font: bold 12px/14px var(--mono); padding: 0 2px 0 1px; display: flex; justify-content: space-between; align-items: center; }
    .tag.amber { background: #ffc44c; } .tag.jade { background: #00a078; } .tag.white { background: #fff; }
    .tag.slate { background: #9ab4be; } .tag.silver { background: #dadada; }
    .gutter { width: 10px; border: 2px solid #a8f0dc; border-width: 0 3px 0 2px; background: #62c8b0; }
    .scroll { flex: 1; margin: 0 2px 0 1px; display: flex; flex-direction: column; background: #45ad96; border-left: 2px solid #2d7362; border-right: 2px solid #a8f0dc; }
    .scroll .track { flex: 1; display: flex; flex-direction: column; padding-top: 162px; }
    .scroll .thumb { flex: 1; background: var(--teal); border: 2px solid; border-color: #a8f0dc #2d7362 #2d7362 var(--teal); }
    .selected { height: 19px; border: 1px solid #000; background: #ffc44c; line-height: 17px; padding-left: 2px; }
    .canvas { flex: 1; background: #000; min-width: 0; }
    .prompt { flex: none; display: flex; height: 35px; border-top: 1px solid #000; border-bottom: 2px solid #000; background: #ffffcc; font-weight: bold; align-items: stretch; }
    .tool { width: 32px; border: 1px solid #000; border-width: 0 2px 1px 0; background: #ffffcc; display: flex; align-items: center; justify-content: center; }
    .tool svg { border: 2px solid; border-color: #fff #b0b090 #b0b090 #fff; }
    .tool.live { width: 30px; background: #62c8b0; }
    .tool.live svg { background: #ffffcc; }
    .xy { width: 48px; padding: 3px 0 0 4px; display: flex; align-items: center; }
    .coords { width: 171px; border: 2px solid; border-color: #8c8c70 #d0d0a8 #d0d0a8 #8c8c70; margin: 2px 2px 3px 0; padding-left: 4px; background: #ffffcc; }
    .note { padding: 3px 0 0 3px; align-self: center; }
    .status { flex: none; height: 29px; display: flex; align-items: center; justify-content: center; margin: 2px 3px 0 0; padding-left: 4px; background: #b5ffff; border: 1px solid #000; box-shadow: inset 0 4px #d8ffff, inset 0 -2px #d8ffff, inset 0 -4px #5f9090, 0 -2px #5f9090; font-weight: bold; }

    /* Popview */
    .pop { left: 273px; top: 35px; width: 528px; height: 480px; padding: 3px; }
    .pop .work { flex: 1; display: flex; min-height: 0; }
    .pop .field { flex: 1; min-width: 0; background: #000; border: 2px solid; border-width: 3px 3px 3px 2px; border-color: #2f6a5c #a8ecdc #a8ecdc #2f6a5c; }
    .pop .tools { width: 36px; background: var(--teal); border: 1px solid #000; padding-top: 1px; }
    .pop .tools button { display: flex; align-items: center; justify-content: center; width: 34px; height: 35px; background: var(--pale); border: 2px solid #62c8b0; border-bottom: 3px solid #000; box-shadow: inset 2px 2px #d0f6f4, inset -2px -2px #4a8088; }
    .pop .tools svg { outline: 1px solid #000; outline-offset: -1px; }
    .pop .close { height: 28px; margin-top: 1px; border: 2px solid #62c8b0; outline: 1px solid #000; outline-offset: -1px; background: var(--pale); box-shadow: inset 2px 2px #d0f6f4, inset -2px -2px #4a8088; font: bold 15px/20px var(--mono); }

    /* Spreadsheet */
    .sheet { left: 1157px; right: -20px; top: 55px; bottom: 33px; padding: 3px; overflow: hidden; }
    .sheet > .title { color: #fff; background: linear-gradient(90deg, #0a246a, #a6caf0); padding-left: 3px; }
    .bars { background: linear-gradient(90deg, #d8d4cc, #f4f3f0 75%); flex: none; padding-top: 2px; }
    .bar { display: flex; align-items: center; height: 24px; }
    .strip { display: flex; align-items: center; height: 24px; background: linear-gradient(#fafaf8, #dedad2); border-radius: 2px; }
    .handle { width: 3px; height: 15px; margin: 0 1px 0 4px; border-left: 3px dotted #a09c94; }
    .icon { width: 23px; height: 22px; flex: none; display: flex; align-items: center; justify-content: center; }
    .icon.down { border: 1px solid #0a246a; background: #d8dae4; }
    .glyph { font: bold 16px "Liberation Serif", serif; }
    .sep { width: 1px; height: 15px; margin: 0 3px 0 2px; background: #a09c94; flex: none; }
    .more { width: 12px; height: 24px; background: linear-gradient(#a8a49c, #808080); border-radius: 0 3px 3px 0; display: flex; align-items: flex-end; justify-content: center; padding-bottom: 2px; }
    .tail { padding-left: 30px; display: flex; margin-right: 3px; }
    .combo { display: flex; align-items: center; height: 18px; background: #fff; margin-left: 1px; }
    .combo select { appearance: none; flex: 1; padding-left: 3px; font-size: 12px; height: 18px; min-width: 0; }
    .combo .arrow { width: 12px; height: 16px; background: #dcd8d0; display: flex; align-items: center; justify-content: center; }
    .face { width: 151px; } .size { width: 46px; }
    .xmenu { display: flex; align-items: center; height: 25px; padding-top: 1px; font-size: 10px; }
    .xmenu .cj { font-size: 12px; line-height: 1; }
    .xmenu button { width: 58px; text-align: left; white-space: nowrap; }
    .xmenu .icon { width: 23px; margin-right: 4px; }
    .xmenu .wide { width: 160px; }
    .ask { flex: 1; height: 17px; background: #fff; color: #888; font-size: 12px; padding-left: 3px; margin-left: 7px; min-width: 0; }
    .ask::placeholder { color: #888; }
    .fbar { flex: none; display: flex; height: 20px; margin-top: 1px; padding: 1px 0 1px 2px; align-items: stretch; font-size: 13px; }
    .fbar .cell { width: 106px; background: #fff; text-align: center; }
    .fbar .fx { width: 67px; text-align: right; padding-right: 4px; font: italic bold 13px/16px "Liberation Serif", serif; }
    .fbar .drop { width: 8px; margin-left: 4px; padding-top: 8px; }
    .fbar .formula { flex: 1; background: #fff; font-size: 16px; padding-left: 11px; min-width: 0; }
    .gridwrap { flex: 1; min-height: 0; overflow: hidden; background: #fff; border-top: 1px solid #404040; border-left: 1px solid #808080; }
    table { table-layout: fixed; border-collapse: separate; border-spacing: 0; width: 779px; font: bold 15px/19px var(--mono); }
    td, th { padding: 0; border-right: 1px solid #000; border-bottom: 1px solid #000; text-align: center; vertical-align: middle; overflow: hidden; }
    td { padding-top: 1px; }
    .cj { font-size: 17px; line-height: 1; }
    thead th, th.rh { background: #d4d0c8; border-color: #808080; font: 14px/17px var(--mono); }
    thead th { padding-top: 2px; }
    thead th.sel, th.rh.sel { background: #b6bdd6; border-color: #0a246a; }
    th.rh { vertical-align: bottom; }
    td.heading { font: bold 24px/24px var(--mono); border-right: 0; padding-top: 5px; }
    .heading .cj { font-size: 24px; }
    .blue { color: #0000d8; }
    .red { color: #e00000; }
    .light { font-weight: normal; }
    .light .cj { font-size: 16px; }
    td.text { font-size: 13px; text-align: left; padding: 0 0 0 2px; }
    td.text .cj { font-size: 14px; }
    td.fill { background: #ffff00; }
    td.warn { color: #ff0000; }
    td.first { text-align: left; padding-left: 4px; }
    td.topped { vertical-align: top; padding-top: 27px; }
    td.active { outline: 3px double #000; outline-offset: -1px; position: relative; }
    td.link { font: 13px/17px var(--mono); text-align: left; vertical-align: bottom; padding: 0 0 3px 2px; color: #660066; }
    td.spec { text-align: left; padding-left: 3px; border-right: 0; }
    td.over { vertical-align: top; font-size: 15px; line-height: 17px; padding-top: 0; padding-left: 3px; }
    td.opts { text-align: left; vertical-align: top; padding: 5px 0 0 4px; font: 13px/17px var(--mono); color: #222; border-right: 0; }
    .opts .row { display: flex; align-items: center; }
    .opts .cj { font-size: 12px; }
    .opts label { display: flex; align-items: center; gap: 5px; margin: 0 0 0 2px; }
    .opts label.apart { margin-left: 28px; }
    .opts .apart .cj { font-size: 16px; }
    .opts input { appearance: none; width: 13px; height: 13px; background: #fff; border: 1px solid #404040; border-right-color: #d4d0c8; border-bottom-color: #d4d0c8; display: flex; }
    .opts input:checked::after { content: "✔"; font: 11px/11px "DejaVu Sans", sans-serif; color: #000; }
    .remark { background: linear-gradient(225deg, #d00000 5px, transparent 5px); }

    .tabs { flex: none; display: flex; height: 17px; background: #d4d0c8; border-top: 1px solid #404040; font-size: 11px; align-items: center; }
    .tabs .nav { width: 16px; height: 16px; display: flex; align-items: center; justify-content: center; }
    .tabs .tab { width: 53px; height: 16px; text-align: center; border-bottom: 1px solid #000; }
    .tabs .tab.cur { background: linear-gradient(#fff, #fff) center / 41px 100% no-repeat; text-decoration: underline; text-underline-offset: 2px; border-color: #fff; }
    .tabs .slash { width: 8px; margin: 0 -4px; z-index: 1; }
    .hscroll { flex: 1; display: flex; margin-left: 128px; height: 16px; border-left: 3px double #808080; background: #e8e6e0; }
    .hscroll .nav { border: 1px solid; border-color: #fff #404040 #404040 #fff; background: #d4d0c8; margin: 0 1px 0 3px; }
    .hscroll .bar { flex: 1; height: 16px; background: #d4d0c8; border: 1px solid; border-color: #fff #404040 #404040 #fff; }
    .draw { flex: none; display: flex; height: 28px; padding: 2px 0; background: linear-gradient(90deg, #d8d4cc, #f4f3f0 75%); border-top: 1px solid #fff; font-size: 10px; }
    .draw .cj { font-size: 12px; }
    .draw .label { display: flex; align-items: center; gap: 6px; padding-left: 3px; white-space: nowrap; }
    .draw .mini { width: 11px; height: 22px; display: flex; align-items: center; justify-content: center; }
    .ready { flex: none; height: 17px; display: flex; align-items: center; gap: 4px; padding-left: 10px; font-size: 12px; }
    .ready .box { height: 14px; border: 1px solid #e8e6e0; }
    .ready .w1 { width: 33px; margin-left: auto; } .ready .w2 { width: 111px; } .ready .w3 { width: 27px; } .ready .w4 { width: 30px; }

    /* Annotations */
    .memo { position: absolute; left: 1172px; top: 296px; width: 445px; height: 91px; background: #fff; box-shadow: 2px 2px 5px 1px rgba(0, 0, 0, 0.7); color: #e00000; padding: 6px 4px 0 6px; font: 500 25px/24px "Noto Sans CJK SC", sans-serif; }
    .memo p { margin: 0; white-space: nowrap; }
    .ring { position: absolute; left: 1265px; top: 434px; width: 618px; height: 43px; border: 2px solid #0000b8; box-shadow: 2px 3px 4px rgba(0, 0, 0, 0.5), inset 2px 3px 4px rgba(0, 0, 0, 0.35); pointer-events: none; }
    .pointer { position: absolute; left: 1370px; top: 387px; }
    .badge { position: absolute; right: -34px; top: 893px; width: 54px; height: 54px; border-radius: 27px; border: 2px solid #d8e8d8; background: radial-gradient(circle at 40% 35%, #7ad888, #249a3c); color: #fff; font: bold 12px/50px "Liberation Sans", sans-serif; padding-left: 4px; text-align: left; box-shadow: 0 1px 4px rgba(0, 0, 0, 0.5); }

    /* Task bar */
    .taskbar { position: absolute; left: 0; right: 0; bottom: -13px; height: 27px; display: flex; gap: 2px; padding: 2px; background: #d4d0c8; border-top: 1px solid #fff; font-size: 12px; }
    .task { width: 146px; flex: none; height: 24px; display: flex; align-items: center; gap: 3px; padding-left: 3px; border: 1px solid; border-color: #fff #404040 #404040 #fff; overflow: hidden; white-space: nowrap; }
    .start { width: 47px; gap: 1px; font-weight: bold; padding-left: 2px; margin-right: 8px; }
    .quick { display: flex; gap: 18px; width: 108px; border-left: 2px groove #fff; padding: 4px 0 0 15px; }
    .tray { margin-left: 17px; flex: 1; display: flex; gap: 8px; padding: 4px 0 0 14px; border: 1px solid #808080; border-right: 0; }
    .chip { width: 32px; margin-left: 8px; border-left: 2px groove #fff; border-right: 2px groove #fff; padding: 5px 8px; }
  `;

  private logoX() {
    return html`<svg width="16" height="15" viewBox="0 0 16 15"><path d="M1 2h14v12H1z" fill="#fff" stroke="#888"></path><path d="M0 0h14v3H0z" fill="#000060"></path><path d="M4 5l7 7M11 5l-7 7" stroke="#b8a800" stroke-width="2"></path></svg>`;
  }

  private down() {
    return html`<svg width="7" height="4" viewBox="0 0 7 4"><path d="M0 0h7L4 4H3z"></path></svg>`;
  }

  private more() {
    return html`<button class="more" aria-label="Toolbar options"><svg width="8" height="8" viewBox="0 0 8 8"><path d="M1 0h6v2H1zM1 4h6L4 7z" fill="#000"></path></svg></button>`;
  }

  private icon(name: string, pressed = false) {
    return html`<button class=${classMap({ icon: true, down: pressed })} aria-label=${name}><svg width="18" height="18" viewBox="0 0 18 18">${ICONS[name]}</svg></button>`;
  }

  private caption(kind: "min" | "max" | "close") {
    const d = { min: "M1 8h6v2H1z", max: "M0 0h10v9H0zM1 2v6h8V2z", close: "M0 1h2l3 3 3-3h2L6 5l4 4H8L5 6 2 9H0l4-4z" }[kind];
    return html`<button class="caption" aria-label=${kind}><svg width="10" height="10" viewBox="0 0 10 10"><path d=${d} fill-rule="evenodd"></path></svg></button>`;
  }

  private layers() {
    const marks: Record<string, unknown> = {
      hand: html`<svg width="8" height="8" viewBox="0 0 8 8"><path d="M4 0h1v2h3v3H7v2H6v1H1V7H0V4h3V1h1z"></path></svg>`,
      grid: html`<svg width="6" height="6" viewBox="0 0 6 6"><path d="M0 0h6v6H0zM1 1v1h1V1zM4 1v1h1V1zM1 4v1h1V4zM4 4v1h1V4z" fill-rule="evenodd"></path></svg>`,
    };
    return LAYER_GROUPS.map(
      (group) => html`<div class="group">
        ${group.map((l) => html`<div class="layer">
          <input type="checkbox" class=${classMap({ tick: true, on: !!l.on })} aria-label=${l.name} ?checked=${l.on} />
          <span class="dot ${l.dot ?? ""}"></span>
          <span class="tag ${l.tone ?? ""}">${l.name}${l.mark ? marks[l.mark] : nothing}</span>
        </div>`)}
      </div>`,
    );
  }

  private editor() {
    return html`<section class="window editor">
      <div class="title">${this.logoX()}<span class="name">Graphic Editor 9.07b2 (00@HY-HYCAM-PC066 - Windows, pid:4028)</span>
        ${this.caption("min")}${this.caption("max")}${this.caption("close")}</div>
      <div class="top">
        <nav class="menubar">
          <button><u>F</u>ile</button><button><u>E</u>dit</button><button><u>A</u>ctions</button><button>O<u>p</u>tions</button><button>Analysis</button>
          <button class="help">Help</button>
        </nav>
        <div class="brand">
          <div class="logo">
            <svg width="22" height="24" viewBox="0 0 22 24"><path d="M3 3l19-2v4zM0 10l21-2v4zM0 17l20-2v4z" fill="#e01020"></path></svg>
            <span>Fr<span class="eye">o</span>ntline</span>
          </div>
          <div class="product">Genesis 2000</div>
          <div class="clock">30 Jun 2015<br />11:15 AM</div>
        </div>
      </div>
      <div class="body">
        <aside class="panel">
          <div class="info">Job : 6b42u00fa0</div>
          <div class="info">Step: cam</div>
          <div class="matrix"><button>Job Matrix ...</button></div>
          <div class="lists">
            <div class="view">${this.layers()}</div>
            <div class="gutter"></div>
            <div class="scroll">
              <svg width="11" height="12" viewBox="0 0 11 12"><path d="M0 12L5 0 11 12z" fill="#62c8b0" stroke="#a8f0dc"></path></svg>
              <div class="track"><div class="thumb"></div></div>
              <svg width="11" height="12" viewBox="0 0 11 12"><path d="M0 1h11L5 11z" fill="#62c8b0" stroke="#a8f0dc"></path></svg>
            </div>
          </div>
          <div class="selected">Selected : 0</div>
        </aside>
        <svg class="canvas" width="100%" height="100%"><g transform="translate(-159 -79)">${boardArt()}</g></svg>
      </div>
      <div class="prompt">
        <button class="tool" aria-label="Snap"><svg width="25" height="25" viewBox="0 0 21 21"><path d="M1 1h19v19H1zM4 4v13M4 17h13M5 5l11 11M5 9V5h4M16 12v4h-4" fill="none" stroke="#000"></path></svg></button>
        <button class="tool" aria-label="Angle"><svg width="25" height="25" viewBox="0 0 21 21"><path d="M1 1h19v19H1zM3 17h15M3 17L17 3M7 4v4h3M11 12h3v3h-3zM15 12l3 3M18 12l-3 3" fill="none" stroke="#000"></path></svg></button>
        <button class="tool live" aria-label="Grid"><svg width="23" height="27" viewBox="0 0 19 21"><path d="M2 8l5-5h10v15H2zM2 11h15M9 3v15" fill="none" stroke="#000"></path></svg></button>
        <label class="xy" for="xy">X Y :</label>
        <input id="xy" class="coords" value="I" />
        <button class="tool live" aria-label="Message"><svg width="23" height="27" viewBox="0 0 19 23"><path d="M3 3h13v17H3z" fill="none" stroke="#000"></path><path d="M9 6h1v8H9zM9 16h1v2H9z" stroke="#000"></path></svg></button>
        <span class="note">&lt;M1&gt; - Select first area corner</span>
      </div>
      <div class="status">No features was selected</div>
    </section>`;
  }

  private popview() {
    return html`<section class="window pop">
      <div class="title">${this.logoX()}<span class="name">Popview - 1</span>${this.caption("close")}</div>
      <div class="work">
        <svg class="field" viewBox="26 93 1392 1257" preserveAspectRatio="none" shape-rendering="crispEdges">${popArt()}</svg>
        <div class="tools">${POP_ICONS.map(([name, art]) => html`<button aria-label=${name}><svg width="22" height="22" viewBox="0 0 22 22">${art}</svg></button>`)}</div>
      </div>
      <button class="close">Close</button>
    </section>`;
  }

  private rh(n: number, h: number) {
    return html`<th class=${classMap({ rh: true, sel: n === 8 })} height=${h}>${n}</th>`;
  }

  private grid() {
    const cols = [35, 58, 37, 89, 61, 81, 54, 49, 89, 139, 87];
    const cam = [
      { text: "过孔打在贴片上的无需树脂塞孔，按正常的盘中孔阻焊塞孔制作，不允许有绿油帽", cls: "red active", link: "" },
      { text: "drl2-6层的孔拆孔制作，拆成drl2-5，drl5-6制作", cls: "", link: "" },
      { text: "附图所示处的阻焊框删除制作", cls: "fill warn", link: "Sheet2!A" },
      { text: "客户同意缩小BGA焊盘1.5mil", cls: "fill", link: "" },
      { text: "附图所示处的过孔允许稍微移动一点，避免接触到BGA焊盘", cls: "fill", link: "Sheet3!A" },
      { text: "", cls: "", link: "" },
      { text: "", cls: "", link: "" },
    ];
    return html`<table>
      <colgroup>${cols.map((w) => html`<col width=${w} />`)}</colgroup>
      <thead><tr><th height="20"></th>${[..."ABCDEFGHIJ"].map((c) => html`<th class=${classMap({ sel: c >= "C" && c <= "I" })}>${c}</th>`)}</tr></thead>
      <tbody>
        <tr>${this.rh(1, 30)}<td class="heading" colspan="10">${mix("预审指示")}</td></tr>
        <tr>${this.rh(2, 40)}<td>${mix("产品")}<br />${mix("编号")}</td><td colspan="3">6B42U00FA0</td><td>${mix("预审日期")}</td>
          <td colspan="2">2015/6/29</td><td>${mix("预审人")}</td><td>${mix("熊丹莉")}</td><td class="first">${mix("附件/附")}</td></tr>
        <tr>${this.rh(3, 30)}<td rowspan="4" class="blue topped">${mix("待确认")}</td><td class="light">${mix("序号")}</td>
          <td colspan="5" class="blue">${mix("待与客户确认问题(原因与内容)")}</td><td colspan="2" class="blue">${mix("预审建议")}</td><td></td></tr>
        ${[4, 5, 6].map((n) => html`<tr>${this.rh(n, 34)}<td></td><td colspan="5"></td><td colspan="2"></td><td></td></tr>`)}
        <tr>${this.rh(7, 45)}<td colspan="2">${mix("工艺流程")}<br />${mix("指示")}</td><td colspan="7"></td><td></td></tr>
        ${cam.map((c, i) => html`<tr>${this.rh(8 + i, 32)}
          ${i ? nothing : html`<td rowspan="7">CAM<br />${mix("指示")}</td>`}
          <td>${i + 1}</td><td colspan="7" class="text ${c.cls}">${mix(c.text)}</td>
          <td class="link">${c.link ? html`<a href="#${c.link}">${c.link}</a>` : nothing}</td></tr>`)}
        ${[1, 2, 3, 4, 5].map((n) => html`<tr>${this.rh(14 + n, 33)}
          ${n > 1 ? nothing : html`<td rowspan="5">${mix("工序")}<br />${mix("指示")}</td>`}
          <td>${n}</td><td colspan="7"></td><td></td></tr>`)}
        ${[1, 2].map((n) => html`<tr>${this.rh(19 + n, 30)}
          ${n > 1 ? nothing : html`<td rowspan="2" class="red remark">${mix("不可批")}<br />${mix("量制作")}<br />${mix("项目")}</td>`}
          <td>${n}</td><td colspan="7"></td><td></td></tr>`)}
        <tr>${this.rh(22, 30)}<td rowspan="2"></td><td></td><td colspan="8" class="spec">${mix("芯板规格(厚度单位")}<span class="red">mm</span>${mix("，铜厚单位")}<span class="red">${mix("oz，如0.25 1/1")}</span>)</td></tr>
        <tr>${this.rh(23, 32)}<td>1</td><td class="first over red">0.51<br />0.5/0.5</td>
          <td colspan="7" class="opts"><div class="row">${mix("芯板大料尺寸:")}
            <label><input type="checkbox" checked />48X36inch</label><label><input type="checkbox" checked />48X42inch</label>
            <label><input type="checkbox" />18X24inch</label><label class="apart"><input type="checkbox" />${mix("请购")}</label></div></td></tr>
      </tbody>
    </table>`;
  }

  private sheet() {
    const menu = [["文件", "F"], ["编辑", "E"], ["视图", "V"], ["插入", "I"], ["格式", "O"], ["工具", "T"], ["数据", "D"], ["窗口", "W"], ["帮助", "H"]];
    const sep = html`<span class="sep"></span>`;
    const slash = (flip = false) => html`<svg class="slash" width="8" height="16" viewBox="0 0 8 16"><path d=${flip ? "M0 0L7 16" : "M8 0L1 16"} stroke="#000" fill="none"></path></svg>`;
    const mini = (name: string) => html`<button class="mini" aria-label="${name} options">${this.down()}</button>`;
    return html`<section class="window sheet">
      <div class="title">
        <svg width="15" height="15" viewBox="0 0 15 15"><path d="M0 0h15v15H0z" fill="#2c7a34"></path><path d="M2 2h11v11H2z" fill="#e8f6e8"></path><path d="M4 4l7 7M11 4l-7 7" stroke="#2c8a38" stroke-width="2"></path></svg>
        <span class="name">Microsoft Excel - 6B42U00FA0-预审指示.xls</span>
      </div>
      <div class="bars">
        <div class="bar">
          <div class="strip"><span class="handle"></span>
            ${["New", "Open", "Save", "Permission", "E-mail"].map((n) => this.icon(n))}${sep}
            ${["Print", "Preview"].map((n) => this.icon(n))}${sep}
            ${["Spelling", "Research"].map((n) => this.icon(n))}${sep}
            ${["Cut", "Copy"].map((n) => this.icon(n))}<div class="tail">${this.more()}</div>
          </div>
          <div class="strip"><span class="handle"></span>
            <div class="combo face"><select aria-label="Font"><option>宋体</option></select><span class="arrow">${this.down()}</span></div>
            <div class="combo size"><select aria-label="Font size"><option>10</option></select><span class="arrow">${this.down()}</span></div>
            ${sep}<button class="icon down glyph">B</button><button class="icon glyph"><i>I</i></button><button class="icon glyph"><u>U</u></button>${sep}
            ${this.icon("Align left", true)}${this.icon("Center")}${this.icon("Align right")}${this.icon("Merge", true)}${sep}
            ${this.icon("Currency")}<button class="icon">%</button>
          </div>
        </div>
        <nav class="xmenu"><span class="handle"></span>${this.icon("Workbook")}
          ${menu.map(([t, k]) => html`<button><span class="cj">${t}</span>(<u>${k}</u>)</button>`)}
          <button class="wide">Adobe PDF(<u>B</u>)</button><input class="ask" aria-label="Help search" placeholder="键入需" />
        </nav>
        <div class="bar"><div class="strip"><span class="handle"></span>${this.icon("PDF")}${this.icon("PDF review")}${this.more()}</div></div>
      </div>
      <div class="fbar">
        <input class="cell" aria-label="Name box" value="C8" /><span class="drop">${this.down()}</span><span class="fx">fx</span>
        <input class="formula" aria-label="Formula" value="过孔打在贴片上的无需树脂塞孔，按正常的盘中孔阻焊塞孔制作，不允许有绿油帽" />
      </div>
      <div class="gridwrap">${this.grid()}</div>
      <div class="tabs">
        ${["M2 1h1v7H2zM8 1v7L4 5z", "M6 1v7L2 5z", "M3 1v7l4-3z", "M6 1h1v7H6zM1 1v7l4-3z"].map((d, i) => html`<button class="nav" aria-label="Scroll tabs ${i + 1}"><svg width="9" height="9" viewBox="0 0 9 9"><path d=${d}></path></svg></button>`)}
        ${slash(true)}
        ${[1, 2, 3, 4, 5, 6, 7].map((n) => html`<button class=${classMap({ tab: true, cur: n === 1 })}>Sheet${n}</button>${slash()}`)}
        <div class="hscroll"><button class="nav" aria-label="Scroll left"><svg width="9" height="9" viewBox="0 0 9 9"><path d="M6 0v9L2 5z"></path></svg></button><div class="bar"></div></div>
      </div>
      <div class="draw">
        <div class="strip"><span class="handle"></span>
          <button class="label"><span><span class="cj">绘图</span>(<u>R</u>)</span>${this.down()}</button>${this.icon("Select")}${sep}
          <button class="label"><span><span class="cj">自选图形</span>(<u>U</u>)</span>${this.down()}</button>
          ${["Line", "Arrow", "Rectangle", "Oval", "Text box", "Vertical text box", "WordArt", "Diagram", "Clip art", "Picture"].map((n) => this.icon(n))}${sep}
          ${["Fill colour", "Line colour", "Font colour"].map((n) => [this.icon(n), mini(n)])}
          ${["Line style", "Dash style", "Arrow style", "Shadow", "3-D"].map((n) => this.icon(n))}${this.more()}
        </div>
      </div>
      <div class="ready">就绪<span class="box w1"></span><span class="box w2"></span><span class="box w3"></span><span class="box w4"></span></div>
    </section>`;
  }

  private glyph(name: string) {
    return html`<svg width="16" height="16" viewBox="0 0 16 16">${TASK_ICONS[name]}</svg>`;
  }

  render() {
    return html`
      ${this.editor()} ${this.popview()} ${this.sheet()}
      <div class="ring"></div>
      <svg class="pointer" width="70" height="56" viewBox="0 0 70 56"><path d="M9 0h8l27 27 6-5q8 12 14 30Q44 46 38 33l2-1z" fill="#f00000"></path></svg>
      <div class="memo"><p>见预审指示，附图两个孔两面都打在贴</p><p>片上，确认是否塞孔</p></div>
      <button class="badge">70</button>
      <footer class="taskbar">
        <button class="task start"><svg width="16" height="16" viewBox="0 0 16 16"><path d="M1 3q4-2 6 0v5q-3-2-6 0z" fill="#e05020"></path><path d="M8 3q4 2 7 0v5q-3 2-7 0z" fill="#60b030"></path><path d="M1 9q3-2 6 0v5q-3-2-6 0z" fill="#3070d0"></path><path d="M8 9q4 2 7 0v5q-3 2-7 0z" fill="#f0c020"></path></svg>开始</button>
        <div class="quick">${this.glyph("ie")}${this.glyph("red")}${this.glyph("ie")}</div>
        ${TASKS.map(([i, t]) => html`<button class="task">${this.glyph(i)}<span>${t}</span></button>`)}
        <div class="chip"><svg width="14" height="14" viewBox="0 0 14 14"><path d="M1 7q4-6 12-6M1 11q4-6 12-5" fill="none" stroke="#999" stroke-width="2"></path></svg></div>
        <div class="tray">${["check", "shield", "ball", "red", "sky"].map((n) => this.glyph(n))}</div>
      </footer>`;
  }
}
